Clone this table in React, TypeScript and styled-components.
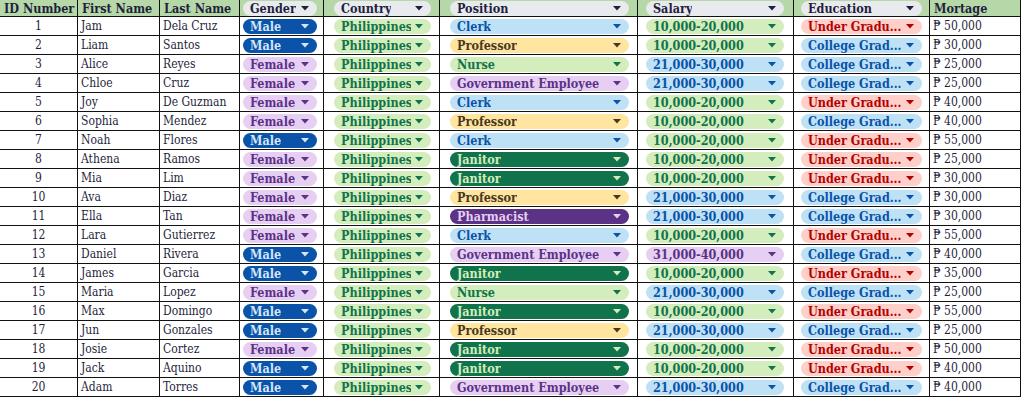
import React from "react";
import styled, { createGlobalStyle } from "styled-components";

type Tone = "grey" | "darkBlue" | "lilac" | "green" | "blue" | "yellow" | "darkGreen" | "purple" | "red";

const tones: Record<Tone, { bg: string; fg: string }> = {
  grey: { bg: "#e8eaed", fg: "#1f1f3d" },
  darkBlue: { bg: "#0a53a8", fg: "#d6e6fa" },
  lilac: { bg: "#e6cff2", fg: "#5a3286" },
  green: { bg: "#d4edbc", fg: "#11734b" },
  blue: { bg: "#bfe1f6", fg: "#0a53a8" },
  yellow: { bg: "#ffe5a0", fg: "#473821" },
  darkGreen: { bg: "#11734b", fg: "#d4edbc" },
  purple: { bg: "#5a3286", fg: "#e6cff2" },
  red: { bg: "#ffcfc9", fg: "#b10202" },
};

const GlobalStyle = createGlobalStyle`
  body {
    margin: 0;
    background: #fff;
    font-family: "DejaVu Serif Condensed", "Liberation Serif", serif;
  }
`;

// width includes the 1px right border; pl/pr place the chip inside the cell
const columns = [
  { title: "ID Number", width: 78 },
  { title: "First Name", width: 82 },
  { title: "Last Name", width: 80 },
  { title: "Gender", width: 84, chip: true, pl: 3, pr: 6 },
  { title: "Country", width: 116, chip: true, pl: 10, pr: 8 },
  { title: "Position", width: 198, chip: true, pl: 10, pr: 8 },
  { title: "Salary", width: 156, chip: true, pl: 8, pr: 9 },
  { title: "Education", width: 136, chip: true, pl: 7, pr: 7 },
  { title: "Mortage", width: 91 },
];

const genderTone: Record<string, Tone> = { Male: "darkBlue", Female: "lilac" };
const positionTone: Record<string, Tone> = {
  Clerk: "blue",
  Professor: "yellow",
  Nurse: "green",
  "Government Employee": "lilac",
  Janitor: "darkGreen",
  Pharmacist: "purple",
};
const salaryTone: Record<string, Tone> = {
  "10,000-20,000": "green",
  "21,000-30,000": "blue",
  "31,000-40,000": "lilac",
};
const educationTone: Record<string, Tone> = {
  "Under Gradu...": "red",
  "College Grad...": "blue",
};

const U = "Under Gradu...";
const C = "College Grad...";
const S1 = "10,000-20,000";
const S2 = "21,000-30,000";
const S3 = "31,000-40,000";

const people: [string, string, string, string, string, string, string][] = [
  ["Jam", "Dela Cruz", "Male", "Clerk", S1, U, "50,000"],
  ["Liam", "Santos", "Male", "Professor", S1, C, "30,000"],
  ["Alice", "Reyes", "Female", "Nurse", S2, C, "25,000"],
  ["Chloe", "Cruz", "Female", "Government Employee", S2, C, "25,000"],
  ["Joy", "De Guzman", "Female", "Clerk", S1, U, "40,000"],
  ["Sophia", "Mendez", "Female", "Professor", S1, C, "40,000"],
  ["Noah", "Flores", "Male", "Clerk", S1, U, "55,000"],
  ["Athena", "Ramos", "Female", "Janitor", S1, U, "25,000"],
  ["Mia", "Lim", "Female", "Janitor", S1, U, "30,000"],
  ["Ava", "Diaz", "Female", "Professor", S2, C, "30,000"],
  ["Ella", "Tan", "Female", "Pharmacist", S2, C, "30,000"],
  ["Lara", "Gutierrez", "Female", "Clerk", S1, U, "55,000"],
  ["Daniel", "Rivera", "Male", "Government Employee", S3, C, "40,000"],
  ["James", "Garcia", "Male", "Janitor", S1, U, "35,000"],
  ["Maria", "Lopez", "Female", "Nurse", S2, C, "25,000"],
  ["Max", "Domingo", "Male", "Janitor", S1, U, "55,000"],
  ["Jun", "Gonzales", "Male", "Professor", S2, C, "25,000"],
  ["Josie", "Cortez", "Female", "Janitor", S1, U, "50,000"],
  ["Jack", "Aquino", "Male", "Janitor", S1, U, "40,000"],
  ["Adam", "Torres", "Male", "Government Employee", S2, C, "40,000"],
];

const Arrow: React.FC<{ color: string }> = ({ color }) => (
  <svg width="8" height="5" viewBox="0 0 8 5">
    <polygon points="0,0 8,0 4,4.5" fill={color} />
  </svg>
);

const Chip: React.FC<{ tone: Tone; label: string }> = ({ tone, label }) => (
  <ChipBox $tone={tone}>
    <ChipLabel>{label}</ChipLabel>
    <Arrow color={tones[tone].fg} />
  </ChipBox>
);

const App: React.FC = () => {
  const template = columns.map((c) => `${c.width}px`).join(" ");
  return (
    <>
      <GlobalStyle />
      <Sheet $template={template}>
        {columns.map((col) => (
          <HeaderCell key={col.title} $pl={col.pl ?? 4} $pr={col.pr ?? 4}>
            {col.chip ? <Chip tone="grey" label={col.title} /> : col.title}
          </HeaderCell>
        ))}
        {people.map((p, i) => {
          const [first, last, gender, position, salary, education, mortage] = p;
          return (
            <React.Fragment key={i}>
              <Cell $align="center">{i + 1}</Cell>
              <Cell>{first}</Cell>
              <Cell>{last}</Cell>
              <Cell $pl={3} $pr={6}>
                <Chip tone={genderTone[gender]} label={gender} />
              </Cell>
              <Cell $pl={10} $pr={8}>
                <Chip tone="green" label="Philippines" />
              </Cell>
              <Cell $pl={10} $pr={8}>
                <Chip tone={positionTone[position]} label={position} />
              </Cell>
              <Cell $pl={8} $pr={9}>
                <Chip tone={salaryTone[salary]} label={salary} />
              </Cell>
              <Cell $pl={7} $pr={7}>
                <Chip tone={educationTone[education]} label={education} />
              </Cell>
              <Cell>₱ {mortage}</Cell>
            </React.Fragment>
          );
        })}
      </Sheet>
    </>
  );
};

const Sheet = styled.div<{ $template: string }>`
  display: grid;
  grid-template-columns: ${(p) => p.$template};
  grid-template-rows: 17px;
  grid-auto-rows: 19px;
  width: max-content;
`;

const HeaderCell = styled.div<{ $pl: number; $pr: number }>`
  display: flex;
  align-items: center;
  background: #b6d7a8;
  border-right: 1px solid #111;
  border-bottom: 1px solid #111;
  padding: 0 ${(p) => p.$pr}px 0 ${(p) => p.$pl}px;
  font-size: 12.5px;
  font-weight: bold;
  color: #1f1f3d;
  white-space: nowrap;
  overflow: hidden;
`;

const Cell = styled.div<{ $align?: string; $pl?: number; $pr?: number }>`
  display: flex;
  align-items: center;
  justify-content: ${(p) => (p.$align === "center" ? "center" : "flex-start")};
  border-right: 1px solid #111;
  border-bottom: 1px solid #111;
  padding: 0 ${(p) => p.$pr ?? 3}px 0 ${(p) => p.$pl ?? 3}px;
  font-size: 12px;
  color: #1f1f3d;
  white-space: nowrap;
  overflow: hidden;
`;

const ChipBox = styled.div<{ $tone: Tone }>`
  flex: 1;
  min-width: 0;
  height: 15px;
  display: flex;
  align-items: center;
  justify-content: space-between;
  gap: 4px;
  padding: 0 8px 0 7px;
  border-radius: 8px;
  background: ${(p) => tones[p.$tone].bg};
  color: ${(p) => tones[p.$tone].fg};
  font-weight: bold;
  font-size: 12.5px;
`;

const ChipLabel = styled.span`
  overflow: hidden;
  white-space: nowrap;
  line-height: 15px;
`;

export default App;
